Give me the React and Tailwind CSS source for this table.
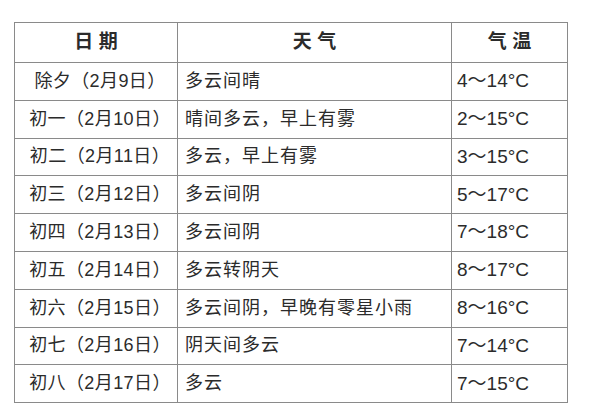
const rows = [
  ["除夕（2月9日）", "多云间晴", "4～14°C"],
  ["初一（2月10日）", "晴间多云，早上有雾", "2～15°C"],
  ["初二（2月11日）", "多云，早上有雾", "3～15°C"],
  ["初三（2月12日）", "多云间阴", "5～17°C"],
  ["初四（2月13日）", "多云间阴", "7～18°C"],
  ["初五（2月14日）", "多云转阴天", "8～17°C"],
  ["初六（2月15日）", "多云间阴，早晚有零星小雨", "8～16°C"],
  ["初七（2月16日）", "阴天间多云", "7～14°C"],
  ["初八（2月17日）", "多云", "7～15°C"],
];

const App = () => {
  return (
    <div className="w-[600px] h-[417px] bg-white pt-[22px] pl-[14px] font-['Liberation_Sans','Noto_Sans_CJK_SC',sans-serif] text-[#2b2b2b]">
      <table className="w-[554px] border-collapse">
        <thead>
          <tr className="h-[40px]">
            <th className="w-[163px] border border-[#8a8a8a] text-[19px] font-bold">日 期</th>
            <th className="w-[274px] border border-[#8a8a8a] text-[19px] font-bold">天 气</th>
            <th className="border border-[#8a8a8a] text-[19px] font-bold">气 温</th>
          </tr>
        </thead>
        <tbody>
          {rows.map((r) => (
            <tr key={r[0]} className="h-[37.8px]">
              <td className="border border-[#8a8a8a] pl-[8px] text-center text-[18px] tracking-[0.4px] whitespace-nowrap">{r[0]}</td>
              <td className="border border-[#8a8a8a] pl-[7px] text-[18px] tracking-[1px] whitespace-nowrap">{r[1]}</td>
              <td className="border border-[#8a8a8a] pl-[5px] text-[19px]">{r[2]}</td>
            </tr>
          ))}
        </tbody>
      </table>
    </div>
  );
};

export default App;
